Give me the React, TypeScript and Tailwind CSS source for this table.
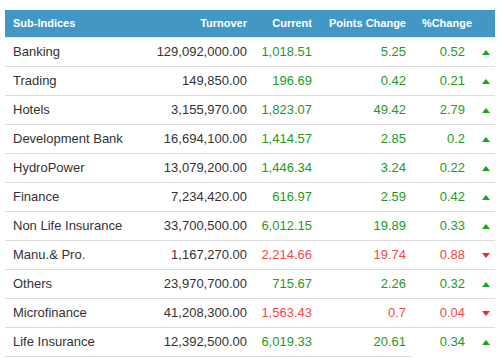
import React from "react";

interface Row { n: string; t: string; c: string; p: string; pc: string; up: boolean; }

const ROWS: Row[] = [
  { n: "Banking", t: "129,092,000.00", c: "1,018.51", p: "5.25", pc: "0.52", up: true },
  { n: "Trading", t: "149,850.00", c: "196.69", p: "0.42", pc: "0.21", up: true },
  { n: "Hotels", t: "3,155,970.00", c: "1,823.07", p: "49.42", pc: "2.79", up: true },
  { n: "Development Bank", t: "16,694,100.00", c: "1,414.57", p: "2.85", pc: "0.2", up: true },
  { n: "HydroPower", t: "13,079,200.00", c: "1,446.34", p: "3.24", pc: "0.22", up: true },
  { n: "Finance", t: "7,234,420.00", c: "616.97", p: "2.59", pc: "0.42", up: true },
  { n: "Non Life Insurance", t: "33,700,500.00", c: "6,012.15", p: "19.89", pc: "0.33", up: true },
  { n: "Manu.& Pro.", t: "1,167,270.00", c: "2,214.66", p: "19.74", pc: "0.88", up: false },
  { n: "Others", t: "23,970,700.00", c: "715.67", p: "2.26", pc: "0.32", up: true },
  { n: "Microfinance", t: "41,208,300.00", c: "1,563.43", p: "0.7", pc: "0.04", up: false },
  { n: "Life Insurance", t: "12,392,500.00", c: "6,019.33", p: "20.61", pc: "0.34", up: true },
];

function Arrow({ up }: { up: boolean }) {
  return up ? (
    <svg width="8" height="5" viewBox="0 0 8 5"><polygon points="4,0 8,5 0,5" fill="#17a417" /></svg>
  ) : (
    <svg width="8" height="5" viewBox="0 0 8 5"><polygon points="0,0 8,0 4,5" fill="#ee2a2a" /></svg>
  );
}

export default function App() {
  return (
    <div className="bg-white w-[501px] h-[358px] overflow-hidden pt-[10px] pl-[5px]" style={{ fontFamily: '"Liberation Sans", Arial, sans-serif' }}>
      <div className="w-[490px]">
        <div className="flex items-center h-[27px] bg-[#4397c5] text-white text-[11px] font-bold border-b border-[#e6e6e6] box-content">
          <div className="w-[145px] pl-[8px]">Sub-Indices</div>
          <div className="w-[97px] text-right">Turnover</div>
          <div className="w-[65px] text-right">Current</div>
          <div className="w-[94px] text-right">Points Change</div>
          <div className="w-[66px] text-right">%Change</div>
          <div className="flex-1" />
        </div>
        {ROWS.map((r, i) => {
          const col = r.up ? "text-[#1f9a1f]" : "text-[#f04a4a]";
          return (
            <div key={r.n} className={`flex items-center h-[28px] text-[13px] box-content ${i < ROWS.length - 1 ? "border-b border-[#dddddd]" : ""}`}>
              <div className="w-[145px] pl-[8px] text-[#333333] whitespace-nowrap">{r.n}</div>
              <div className="w-[97px] text-right text-[#333333]">{r.t}</div>
              <div className={`w-[65px] text-right ${col}`}>{r.c}</div>
              <div className={`w-[94px] text-right ${col}`}>{r.p}</div>
              <div className={`w-[59px] text-right ${col}`}>{r.pc}</div>
              <div className="flex-1 flex justify-center pl-[12px]"><Arrow up={r.up} /></div>
            </div>
          );
        })}
        <div className="h-px w-[406px] bg-[#dddddd]" />
      </div>
    </div>
  );
}
